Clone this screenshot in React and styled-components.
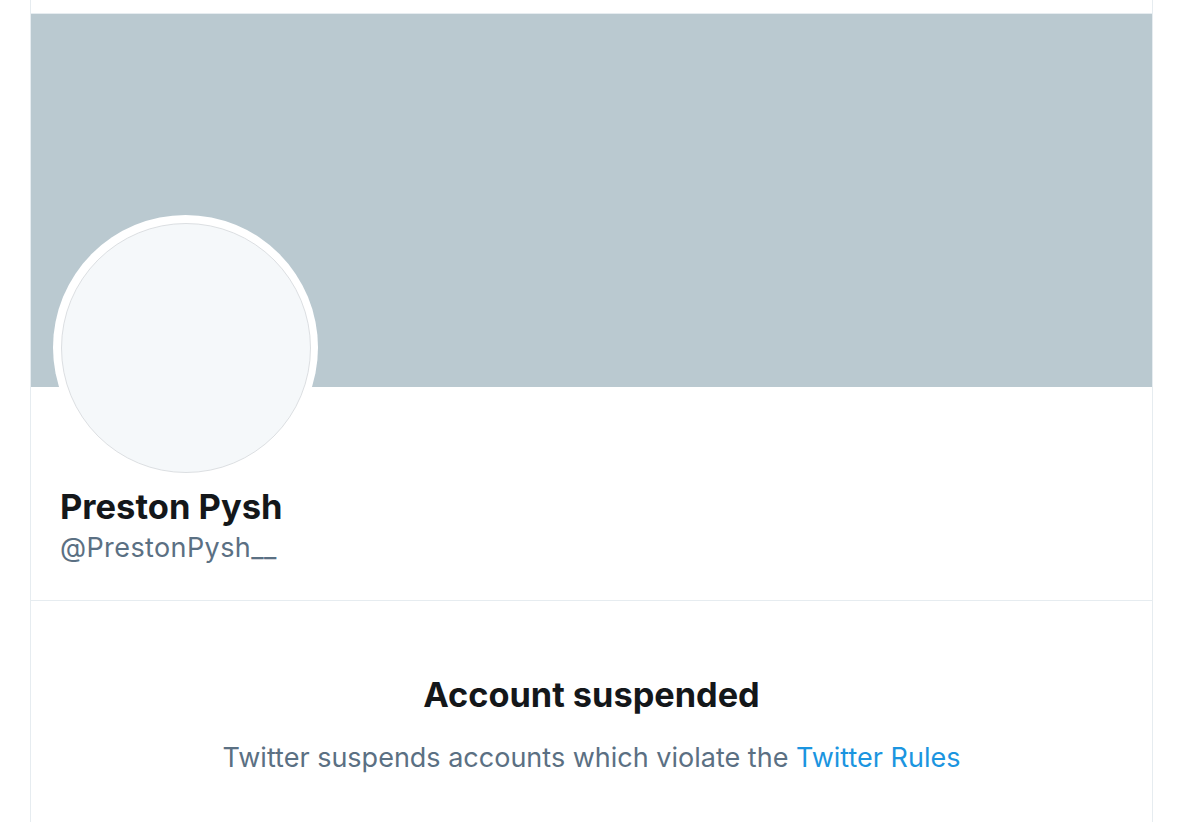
import styled, { createGlobalStyle } from 'styled-components'

const GlobalStyle = createGlobalStyle`
    body {
        margin: 0;
        background: #ffffff;
        font-family: Inter, "Noto Sans", sans-serif;
    }
`
const Column = styled.div`
    margin-left: 30px;
    width: 1121px;
    min-height: 822px;
    border-left: 1px solid #e6ecf0;
    border-right: 1px solid #e6ecf0;
`
const TopBar = styled.div`
    height: 13px;
    border-bottom: 1px solid #e6ecf0;
`
const Banner = styled.div`
    height: 373px;
    background: #bac9d0;
`
const ProfileInfo = styled.div`
    display: flow-root;
    padding: 0 22px;
    height: 213px;
    border-bottom: 1px solid #e6ecf0;
`
const AvatarRing = styled.div`
    width: 265px;
    height: 265px;
    margin-top: -172px;
    border-radius: 50%;
    background: #ffffff;
    display: flex;
    align-items: center;
    justify-content: center;
`
const Avatar = styled.div`
    width: 248px;
    height: 248px;
    border-radius: 50%;
    background: #f5f8fa;
    border: 1px solid #dcdfe2;
`
const Names = styled.div`
    padding-left: 7px;
    margin-top: 7px;
`
const Name = styled.div`
    font-size: 34.5px;
    font-weight: 700;
    color: #14171a;
    line-height: 40px;
`
const Handle = styled.div`
    margin-top: 4px;
    font-size: 27px;
    letter-spacing: 0.4px;
    color: #5b7083;
    line-height: 34px;
`
const Notice = styled.div`
    display: flex;
    flex-direction: column;
    align-items: center;
    padding-top: 74px;
`
const Title = styled.div`
    font-size: 34.3px;
    font-weight: 700;
    color: #14171a;
    line-height: 40px;
`
const Message = styled.div`
    margin-top: 25px;
    font-size: 27px;
    color: #5b7083;
    line-height: 36px;
`
const RulesLink = styled.a`
    color: #1b95e0;
    text-decoration: none;
`

const App = () => {
  return (
    <>
      <GlobalStyle />
      <Column>
        <TopBar />
        <Banner />
        <ProfileInfo>
          <AvatarRing>
            <Avatar />
          </AvatarRing>
          <Names>
            <Name>Preston Pysh</Name>
            <Handle>@PrestonPysh__</Handle>
          </Names>
        </ProfileInfo>
        <Notice>
          <Title>Account suspended</Title>
          <Message>
            Twitter suspends accounts which violate the <RulesLink>Twitter Rules</RulesLink>
          </Message>
        </Notice>
      </Column>
    </>
  )
}

export default App
